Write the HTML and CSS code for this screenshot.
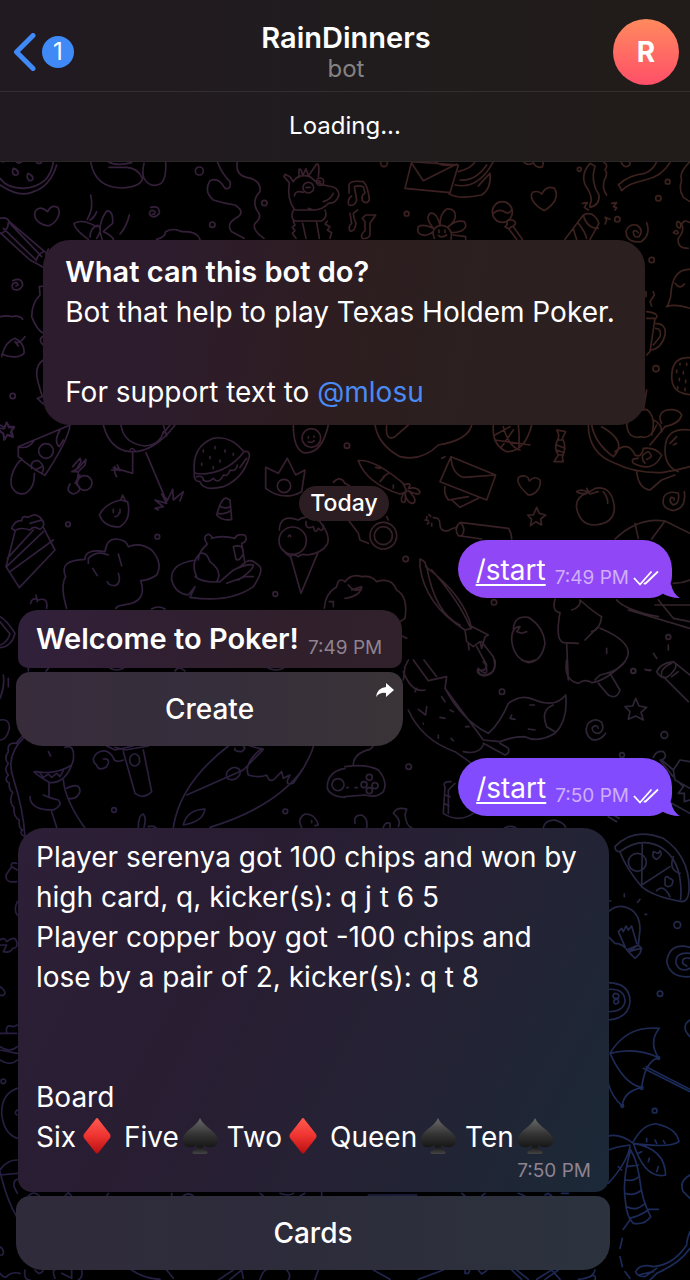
FILE: index.html
```html
<!DOCTYPE html>
<html lang="en">
<head>
<meta charset="utf-8">
<meta name="viewport" content="width=device-width, initial-scale=1">
<title>RainDinners</title>
<link rel="stylesheet" href="styles.css">
</head>
<body>
<svg class="defs" width="0" height="0" aria-hidden="true">
  <defs>
    <linearGradient id="red" x1="0" y1="0" x2="0" y2="1"><stop offset="0" stop-color="#ff5a50"/><stop offset=".5" stop-color="#ee3430"/><stop offset="1" stop-color="#b90f10"/></linearGradient>
    <linearGradient id="black" x1="0" y1="0" x2="0" y2="1"><stop offset="0" stop-color="#6a6a6a"/><stop offset=".45" stop-color="#343434"/><stop offset=".8" stop-color="#171717"/><stop offset="1" stop-color="#454545"/></linearGradient>
    <symbol id="diamond" viewBox="0 0 38 36"><path fill="url(#red)" d="M20 0Q21 0 22 2L33 16Q34 18 33 20L22 34Q20 37 18 34L7 20Q6 18 7 16L18 2Q19 0 20 0Z"/></symbol>
    <symbol id="spade" viewBox="0 0 38 36"><path fill="url(#black)" d="M20 0Q22 5 30 11C36 16 39 20 38 24C37 30 28 31 23 27Q23 32 27 33Q29 36 25 36H15Q11 36 13 33Q17 32 17 27C12 31 4 30 3 24C2 20 4 16 10 11Q18 5 20 0Z"/></symbol>
    <symbol id="checks" viewBox="0 0 26 16"><path d="M1 8L7 14.500L18.500 1.500M12 14L25 1.500M12 14L11 13" fill="none" stroke="#fff" stroke-width="1.800"/></symbol>
  </defs>
</svg>
<div class="chat">
  <svg class="wallpaper" viewBox="0 0 690 1280" preserveAspectRatio="xMidYMin slice" aria-hidden="true">
    <defs>
      <linearGradient id="warm" x1="0" x2="1" y1="0" y2="0"><stop offset="0" stop-color="#35203f"/><stop offset=".3" stop-color="#35203a"/><stop offset=".55" stop-color="#3c2022"/><stop offset="1" stop-color="#3c221c"/></linearGradient>
      <linearGradient id="cool" x1="0" x2="1" y1="0" y2="0"><stop offset="0" stop-color="#251e40"/><stop offset=".5" stop-color="#222247"/><stop offset="1" stop-color="#1b2c5c"/></linearGradient>
      <linearGradient id="fade" x1="0" x2="0" y1="0" y2="1"><stop offset=".35" stop-color="#000"/><stop offset=".85" stop-color="#fff"/></linearGradient>
      <mask id="lower" maskUnits="userSpaceOnUse" x="0" y="0" width="690" height="1280"><rect width="690" height="1280" fill="url(#fade)"/></mask>
      <mask id="doodles" maskUnits="userSpaceOnUse" x="0" y="0" width="690" height="1280">
        <g fill="none" stroke="#fff" stroke-width="5" stroke-linecap="round" stroke-linejoin="round">
          <g transform="translate(0 160) scale(.33333)">
            <path d="M0 55Q20 85 70 85Q150 80 160 5M0 75Q60 115 100 95Q150 80 170 15M40 25q-6 14 3 20q12 2 12-8q-4-10-15-12M84 40q-6 14 3 22q12 0 12-8q-4-10-15-14M48 2q3 12 16 4M110 8q12 6 16-4M5 5l8 0"/>
            <path d="M272 5Q285 85 370 84Q425 78 427 55Q415 25 380 22L327 22M325 5Q350 20 395 8M432 10Q425 40 432 55Q450 85 480 72Q500 60 497 5"/>
            <circle cx="598" cy="33" r="12"/><circle cx="793" cy="129" r="8"/><circle cx="637" cy="194" r="8"/><circle cx="38" cy="708" r="8"/>
            <path d="M652 5Q665 40 690 65Q695 90 675 85Q655 50 630 62Q610 95 640 120Q670 130 705 135Q735 155 715 170Q675 190 695 215Q715 225 732 235M712 5Q705 45 740 52Q785 60 780 95Q755 120 770 150Q790 170 765 190Q755 210 792 235"/>
            <path d="M140 197C110 190 98 170 107 152Q120 135 143 155Q153 133 173 142C185 160 172 185 148 197Z"/>
            <path d="M272 105Q282 145 262 178M290 155Q282 175 270 180M388 165Q380 200 360 222M265 238Q225 210 222 190Q245 175 290 200M300 210Q300 180 320 153Q340 150 338 190Q325 200 310 215Q335 225 340 238M270 232Q270 205 292 196Q310 205 290 235M300 215L306 238"/>
            <path d="M452 142Q480 135 478 160Q460 180 448 162Q450 145 465 155Q465 165 457 162M38 362Q65 350 68 375Q60 395 40 388Q30 370 48 367Q60 375 48 378"/>
            <path d="M470 238Q495 232 497 215Q520 202 545 215Q590 212 600 238"/>
            <path d="M0 175Q20 170 28 185L140 280M0 218L90 300Q110 310 135 325M25 187Q25 210 5 220M30 190L125 290M10 205L105 297M130 275Q115 280 108 302M145 267L138 285L150 300"/>
            <path d="M0 470Q25 465 35 470Q60 465 68 478M5 590Q15 545 45 535Q75 550 72 580Q50 600 5 583M75 530Q55 555 45 545L55 558M132 378L118 380L120 405Q95 430 95 470Q110 510 130 520M130 528Q112 540 130 555M130 600Q100 620 115 670L127 710L112 715L130 732"/>
            <path d="M868 68L852 50L855 43L870 50L880 65Q895 40 930 50Q955 75 985 78Q1015 80 1017 105Q1010 130 985 130Q970 148 945 150H885Q860 120 868 68M897 52V28Q905 25 908 48L918 26L925 48L950 12Q960 10 955 50M883 108Q885 90 910 97M1000 100Q990 120 970 125M925 145L940 150M880 150Q870 175 885 183H965Q985 170 975 150M880 184L885 195L877 202L885 212L877 220L888 235M908 190L918 235M950 188L958 235M982 184L975 192L990 200L982 210L995 218L990 235"/>
            <circle cx="925" cy="83" r="16"/><circle cx="960" cy="65" r="11"/><path d="M918 83L930 82M955 62L962 65"/>
            <path d="M0 795L13 802L20 787L27 803L43 802L32 817L39 832L22 826L12 840L10 822L0 812"/>
          </g>
          <g transform="translate(345 160) scale(.33333)">
            <path d="M12 100V75Q15 60 55 65Q70 80 73 120Q65 135 52 122Q48 105 60 100L55 80Q40 75 28 80L35 120Q30 140 12 135Q5 120 20 108M38 150L25 160Q25 175 33 190Q30 215 15 213Q8 200 20 190L15 160M60 185L52 175L62 165L92 165L75 190V225Q70 238 52 235Q45 225 60 212Z"/>
            <path d="M200 5L180 85L315 98L340 15ZM200 10L235 62L335 12M270 5Q290 20 320 15M340 35Q380 25 390 5M330 75Q400 90 445 5M345 60Q390 65 425 15M310 100Q340 120 410 105Q440 85 435 40Q415 60 400 78"/>
            <circle cx="117" cy="10" r="10"/><circle cx="185" cy="161" r="7"/><circle cx="703" cy="28" r="6"/><circle cx="968" cy="65" r="7"/><circle cx="940" cy="115" r="8"/><circle cx="920" cy="300" r="8"/><circle cx="933" cy="626" r="9"/><circle cx="817" cy="178" r="8"/>
            <path d="M598 152C565 135 552 110 563 97Q580 90 590 102Q605 75 628 85C645 110 625 135 598 152ZM535 5Q550 20 565 8Q570 22 590 22Q597 15 593 5"/>
            <path d="M265 215C240 235 210 225 220 200Q235 190 265 205Q240 175 255 160Q275 155 285 195Q285 160 305 147Q335 145 330 175Q325 190 310 200Q335 178 358 185Q370 200 350 212Q335 218 320 218M268 235C255 205 280 192 300 198Q325 210 318 238M325 225L362 230V238M282 210V218M300 210V218M280 226Q290 236 305 225"/>
            <ellipse cx="472" cy="156" rx="30" ry="31"/><path d="M445 160Q460 145 478 155Q490 165 500 150M485 185Q490 195 480 200Q490 210 500 200Q515 195 510 185Q505 178 490 180M492 208L515 238M505 200L532 238"/>
            <path d="M735 10L750 18Q735 65 762 105Q765 135 735 142M735 142V132Q745 120 730 90Q700 50 735 10M775 5Q792 15 780 30Q790 40 778 60Q770 85 785 105M820 72L830 92Q850 70 900 60Q950 50 975 8M820 75Q850 45 900 40Q925 30 935 5M828 5Q835 25 850 18Q860 10 852 5M800 130L815 128L805 140L815 143L810 150M712 130L727 128L718 142L730 150M780 192L785 180L780 172L795 178"/>
            <path d="M660 238L715 165Q745 150 762 190L735 238M715 165Q725 205 760 205M685 205Q690 225 695 238M700 190Q720 215 725 235"/>
            <path d="M905 188Q918 225 888 245Q845 250 843 215Q850 190 875 195Q898 210 882 230Q865 235 865 215Q872 208 880 218"/>
            <path d="M1035 5Q1000 40 1010 60Q1000 90 1015 112L1035 125M1035 188Q1015 175 1010 195Q1020 210 1000 235Q995 265 1030 265M997 185Q1012 185 1005 205Q990 200 997 185M985 218Q995 205 1000 218Q995 225 985 218M1035 328Q980 325 977 410Q970 435 965 440Q990 430 1035 445M990 370Q1005 390 1018 372M925 395L928 405L915 425L920 438M903 395V410M905 585L915 575L930 475M905 455Q945 460 933 475H905M930 490Q965 490 960 525Q950 565 918 570M932 505Q950 505 945 530L925 555"/>
            <path d="M1035 593Q990 590 982 630Q970 700 1035 704M1005 610V615M1025 610V616M995 630V638M1015 635V642M1003 655V662M1022 660V668M998 680V687M1020 685V692"/>
            <path d="M905 690L895 750M845 795Q860 750 905 748Q935 770 920 825M950 790Q935 760 965 750Q1000 745 1010 765Q1005 790 960 800M925 780Q950 790 950 815"/>
          </g>
          <g transform="translate(0 420) scale(.33333)">
            <path d="M0 25L13 26L20 7L28 20L43 20L34 32L39 48L22 44L14 58L10 40L0 35M210 15L55 80V110Q95 145 135 166Q205 60 210 15M55 80Q85 90 103 60M180 30Q160 65 178 80L190 60M65 115Q25 160 35 200Q50 230 80 218Q105 200 103 160"/><circle cx="138" cy="93" r="22"/><path d="M95 145Q90 120 115 122Q140 140 125 160M105 150L125 140"/>
            <path d="M310 15Q330 90 390 95Q460 100 525 15M363 15Q370 70 435 78Q480 75 490 35M490 15L500 48M510 15L490 40M390 90Q395 80 405 92M398 95V160L340 143M345 140Q340 155 350 170M335 150H355M352 135L360 152M438 98L500 245M475 270L465 265L490 260L465 240L500 250L485 222L503 240L518 208L520 240L550 215L540 243"/>
            <path d="M235 158L230 195M240 165L225 190M218 140L240 115L243 125L228 150M235 145L258 118L255 135L235 155L215 155Z"/><circle cx="254" cy="189" r="22"/><path d="M210 192Q195 215 220 222Q245 215 238 200"/>
            <path d="M362 240Q315 250 298 285Q315 325 360 320Q395 300 383 245ZM362 240L368 225L377 245M340 268V278M360 268V278M345 290Q355 290 358 278"/>
            <circle cx="204" cy="313" r="7"/><circle cx="472" cy="350" r="7"/><circle cx="826" cy="522" r="7"/>
            <path d="M583 158Q575 80 640 55Q690 45 732 95Q750 90 748 110Q730 175 670 200Q610 215 600 185Q580 185 583 158Q600 165 625 160Q690 150 732 95M590 170Q610 165 610 180Q625 190 640 175Q655 195 670 165Q685 170 690 150Q710 155 712 135M740 115L720 142M610 90V96M630 110V116M645 80V86M660 120V126M675 90V96M700 100V106M605 130V136M640 140V146"/>
            <path d="M797 142L797 205Q850 245 905 215L915 150L887 165L862 115L835 160Z"/><circle cx="852" cy="198" r="20"/>
            <path d="M680 235Q665 230 650 285Q670 305 695 298L690 240ZM658 258Q675 268 690 260M652 280Q675 285 692 272M880 15Q880 85 910 98Q965 105 985 15"/><circle cx="934" cy="54" r="28"/><path d="M925 50V54M942 48V52M925 65Q938 70 943 62"/>
            <path d="M35 325Q45 300 65 302Q65 285 85 292Q110 275 125 298Q140 315 120 328Q100 315 90 330Q60 320 45 332ZM45 335L18 440L58 503L165 390L130 322M20 440L130 335M22 415L100 330M30 455L160 360M125 300L90 310"/>
            <path d="M200 565Q180 500 197 470Q175 420 255 418Q255 385 315 395Q320 355 350 357Q380 360 385 380Q420 365 455 390Q490 430 470 465Q450 480 422 482Q440 535 395 550L355 558L347 565M265 430V415Q290 390 325 405M355 402L365 437M278 445L292 467M355 460Q365 490 345 497Q325 497 322 485"/>
            <path d="M595 420Q595 395 622 372Q605 350 625 343Q640 350 635 355Q665 345 705 355Q710 340 735 345Q745 365 725 370L735 430M588 420Q510 430 515 480Q525 520 565 525L585 500L570 532Q690 550 760 500Q790 455 780 440Q755 415 740 425M590 470Q570 430 600 400Q620 395 630 425Q670 455 650 485M585 470Q610 490 660 485L700 450Q725 440 732 430M700 380Q730 370 730 400Q720 425 708 418ZM680 490L735 470L760 470M715 480Q760 450 760 435Q745 430 700 450"/>
            <circle cx="878" cy="362" r="41"/><path d="M838 330Q840 280 895 300Q920 280 960 305Q995 350 980 375Q965 400 920 405Q905 400 895 410Q880 400 870 410Q855 400 850 390M872 410L903 520L955 395M918 305Q915 330 940 320Q945 345 955 325Q970 340 970 315M865 350Q870 340 872 350"/>
            <path d="M92 550Q95 530 115 540Q145 530 140 565M108 525L112 545M0 590Q20 600 45 640Q35 680 0 683M0 605L30 642Q20 670 0 675M455 567Q475 555 495 567M1035 485Q1015 470 1010 500Q975 520 973 565M1000 187Q1020 165 1035 190M988 545H1000V560"/>
            <path d="M85 745V753M145 745L138 753M330 745Q350 755 370 745M525 753Q535 735 555 753M805 745Q830 755 850 745"/>
          </g>
          <g transform="translate(345 420) scale(.33333)">
            <path d="M90 15Q100 75 165 110Q230 125 280 75Q370 60 380 15M125 15Q120 65 150 50L190 15M40 122Q85 115 175 190L185 215L165 222Q65 190 40 122M92 142L105 145M118 170L105 185M145 195V205M130 160L115 170M185 210Q165 230 170 245Q185 255 180 220Q185 250 205 250Q220 240 190 212Q225 230 225 215Q215 200 190 205Q205 185 175 195"/>
            <path d="M318 110L285 185L425 240L452 165ZM318 110Q320 160 355 172L452 165M300 200Q295 220 310 240L370 230M320 240L345 262L400 235M290 115L300 110"/>
            <path d="M445 15Q440 75 485 95Q540 95 560 15M450 45L495 20M448 60L555 75M470 80L505 30M475 20Q490 80 525 90M520 15Q525 60 520 90"/>
            <path d="M635 30Q645 45 638 60Q625 85 640 105L627 125H655Q650 115 655 100Q665 80 652 55L662 35ZM637 60H655M635 75L660 85M635 90L658 98M640 105H655"/>
            <path d="M730 15Q730 100 810 130Q870 160 950 158Q1000 150 1035 140M740 15Q750 70 805 110Q850 65 770 20M845 15Q850 60 890 50Q915 60 935 15M810 95Q850 60 870 105Q890 115 895 85Q930 80 950 105Q925 160 865 130Q855 115 880 115M900 130Q880 105 910 95Q930 110 905 118M960 20L915 75M1035 30Q960 20 960 90Q960 140 1000 155M875 155Q880 205 915 210L950 180L990 165M975 70L995 50M985 75L995 70"/>
            <path d="M550 225C510 190 510 165 540 168Q550 170 553 183Q570 165 585 180C590 205 570 225 550 225ZM575 262L583 280L602 285L587 297L590 315L573 305L556 317L560 298L548 285H565Z"/>
            <path d="M730 218Q690 230 695 265Q705 315 750 315Q810 310 808 260Q800 195 750 205L730 218L725 205L735 222L760 215M695 215Q710 205 730 218Q705 225 695 215M775 215Q790 235 788 250"/>
            <path d="M1018 215Q1025 265 985 272Q945 265 957 230Q970 210 1000 220Q1005 250 985 255Q970 245 978 232Q990 232 987 240"/>
            <path d="M245 290V298M252 284L257 289M240 300L250 302M247 312L252 307M260 310V318M265 293Q285 290 285 315Q285 335 310 332Q330 320 335 325M345 307L490 325Q500 340 500 357M345 307Q325 325 340 347L410 357M345 307Q365 325 350 348"/><circle cx="115" cy="347" r="40"/><circle cx="115" cy="347" r="27"/><circle cx="6" cy="77" r="8"/><circle cx="182" cy="417" r="8"/><circle cx="447" cy="547" r="8"/><circle cx="970" cy="651" r="7"/><circle cx="865" cy="753" r="7"/>
            <path d="M0 190L25 205M10 300L40 340L45 360L70 370M125 290L130 300M225 417Q245 425 242 440Q360 530 380 625L360 630Q240 555 225 440ZM245 440Q270 580 345 615M260 450Q340 540 375 620M360 630L365 665L385 680L405 665L410 685L420 650L430 645L382 620M370 670L372 690M395 680L425 735Q425 755 400 750M410 665L445 710Q460 760 420 765Q400 765 400 750"/>
            <path d="M0 485Q20 460 50 470Q80 465 95 485Q140 470 155 510Q190 530 180 595L165 605M0 535Q40 530 50 505Q30 520 10 495M50 500L20 510M165 645L185 655"/>
            <path d="M505 625Q510 585 550 592Q595 620 600 670Q590 725 550 728Q505 715 500 660Q500 620 525 620L515 635L530 640L545 635"/>
            <path d="M810 357Q880 290 960 303L1035 340M870 310L880 355M960 303L920 357M940 590Q840 570 815 540M930 555H1035M940 540L985 595L1035 605M850 570L1035 625M985 490Q1010 490 1035 480"/>
            <path d="M630 537Q620 575 645 578M680 570Q710 560 705 540Q750 580 770 590Q765 630 740 635M645 578Q630 660 655 668L700 670M720 660L760 620M765 625Q850 660 850 700Q840 750 765 765L750 780M665 672L670 780M785 685V700M925 700L935 715M970 675V690M905 750H918"/>
          </g>
          <g transform="translate(0 660) scale(.33333)">
            <path d="M10 45Q15 80 0 115M25 55V80M0 180Q30 175 28 205Q20 240 0 240M75 230Q15 285 40 355Q70 450 75 530M50 248L70 225M50 250Q20 245 25 275Q10 295 25 310Q10 330 25 345Q10 360 28 370Q25 385 38 398Q25 425 42 443Q40 470 58 480Q55 505 68 510Q55 520 75 530M195 262Q225 250 220 300Q200 370 150 368Q110 345 102 335M105 335Q170 345 215 315M120 340L130 352L145 342L155 352L170 340L180 350L190 332M147 370V410M190 360Q195 420 255 505M90 410Q90 450 160 450Q190 435 175 420Q150 415 130 405M155 455L170 502M200 385Q240 365 240 395Q230 420 208 415M145 275L152 288"/>
            <path d="M320 258L345 270L400 258M345 262L375 270L445 258M370 275L405 400Q430 420 455 395L430 270M370 300Q345 310 340 293Q320 260 290 280Q270 300 290 315Q295 335 320 320Q335 295 310 297"/><ellipse cx="404" cy="300" rx="15" ry="18"/>
            <circle cx="342" cy="450" r="7"/><circle cx="856" cy="454" r="7"/><circle cx="1014" cy="374" r="18"/>
            <path d="M685 258Q540 370 520 502M705 265Q700 275 725 275Q740 265 730 258M750 258L790 268L730 330L560 405M630 502Q830 440 910 325Q940 270 940 258M785 265Q730 310 745 345Q780 355 800 345Q810 375 830 350L845 335L850 355L870 345Q850 380 880 370L910 325M550 495Q560 450 615 447Q610 485 550 495"/><ellipse cx="700" cy="341" rx="22" ry="17" transform="rotate(-30 700 341)"/>
            <path d="M1035 325Q980 335 982 385Q990 410 1035 412M415 502Q415 465 430 462Q440 475 432 502M445 500Q460 495 470 505M905 502Q890 475 915 462Q945 460 955 495L945 497M935 482V488"/>
          </g>
          <g transform="translate(345 660) scale(.33333)">
            <path d="M175 60L180 20L190 0M205 0L250 62L305 50L300 85Q350 180 430 220Q465 190 490 130Q530 100 570 120Q630 145 662 105Q670 180 630 220Q580 250 540 230Q500 230 465 245L415 240L300 85M175 35Q200 100 240 90M190 150Q230 240 330 275L380 310M355 275Q400 285 415 255M415 250L480 285Q495 280 490 265L465 250M625 135Q585 150 605 200L630 215M215 85L210 95M245 140L242 165L220 148M290 110L300 125M315 150L325 155M285 172L300 175M235 190V192M362 200H372M280 225V235M318 235L325 242M500 165L495 175L510 178M555 135H568M550 207L570 210M237 0L275 50"/>
            <path d="M450 0Q455 45 415 48Q390 40 400 25Q425 50 425 30Q425 15 415 5M665 0Q655 60 700 70Q720 55 740 68Q780 65 840 5M760 70L790 105Q815 120 825 90L795 40M935 35Q945 10 985 5Q1005 15 975 45Q955 65 935 35M955 50L1030 125M985 5L1035 45M980 10Q945 25 950 45M980 50L1000 35"/>
            <circle cx="471" cy="95" r="8"/><circle cx="191" cy="320" r="8"/><circle cx="865" cy="33" r="7"/><circle cx="958" cy="225" r="10"/><circle cx="831" cy="285" r="7"/><path d="M900 28L915 32M530 0Q550 10 570 0"/>
            <path d="M872 115L882 138L905 142L888 157L895 180L872 168L850 178L855 155L840 140L863 138ZM782 220Q765 245 740 238Q715 220 728 192Q750 170 770 187Q780 210 762 220Q740 220 742 203Q755 190 760 205"/>
            <path d="M85 258L75 268Q25 280 25 315M0 320Q65 310 100 330Q130 365 115 395Q95 415 60 405L0 410M5 383H10M30 383H37"/><circle cx="73" cy="352" r="9"/><circle cx="57" cy="374" r="9"/><circle cx="90" cy="377" r="9"/><circle cx="73" cy="392" r="9"/>
            <path d="M318 365Q290 365 300 380L295 460Q340 490 385 460M330 370L310 390V460M300 405L315 410M297 430L312 438M30 490Q25 465 50 465Q70 475 65 503M115 502Q120 485 135 490V503M145 460Q155 440 185 447L180 465Q185 500 200 503M160 500Q170 480 145 460M480 503Q495 495 512 503M595 503Q600 480 630 480Q660 490 662 503"/>
            <path d="M925 292Q935 270 955 275Q970 290 950 300M945 300L985 350M950 300L985 330M1035 305L1005 300L985 330L990 360L1035 385M1000 365L1015 380L1000 400H1018V425L1035 420M980 430L1035 460M790 470L815 485M805 465L822 475"/>
          </g>
          <g transform="translate(0 820) scale(.33333)">
            <path d="M50 130Q30 125 35 140L18 165Q15 190 50 185M35 140L52 150M52 245Q40 270 52 285M0 360Q15 350 20 365Q45 345 50 365Q55 385 38 385Q30 400 10 395L20 375L0 375M0 500Q15 510 15 520Q10 530 0 525M20 640Q15 610 40 620L52 615M0 640L50 640M0 680Q30 700 52 680M0 690L52 700"/>
          </g>
          <g transform="translate(0 1060) scale(.33333)">
            <path d="M0 0Q30 20 52 0M52 85Q5 100 5 160Q10 220 52 235M52 150Q40 160 52 165M0 330Q20 300 52 300M0 345L52 340M0 335Q20 420 50 470M42 380Q40 360 52 358M42 380L52 400M0 560Q15 570 8 585H0M0 640Q15 660 25 645Q40 635 60 640M75 630Q70 660 90 660M105 630Q120 650 130 630M165 655Q155 630 165 630M185 640L215 655V630M245 630Q250 650 235 660M395 630Q430 655 480 658M500 630L520 655M655 660L700 630M690 658L725 630L730 655M780 658Q790 630 800 630M860 630Q875 645 865 660M955 630L945 658M85 408Q100 390 118 408M195 408L205 398L215 408M325 400L320 408M515 400V408M550 408Q565 395 580 408M780 400L790 408M840 400Q865 410 880 400M915 400L900 408M965 395V408"/><circle cx="10" cy="64" r="7"/>
          </g>
          <g transform="translate(345 1040) scale(.33333)">
            <path d="M70 465H215M350 460L360 468M420 460L410 468M520 460L540 468M600 465L610 460L620 468M650 460H670M85 690L135 718M220 718L295 690M360 690V700H370L375 690M400 690L410 702L425 692M500 690L530 718M515 690L550 718M620 690L575 718M640 690L600 718M620 690L645 718M700 718Q745 715 750 690"/>
          </g>
          <g transform="translate(590 820) scale(.33333)">
            <path d="M75 80Q130 20 220 55Q300 110 297 210Q295 245 275 245Q190 230 155 200Q105 140 90 95Q75 95 75 80M90 95Q150 50 210 80Q280 120 272 238M157 68L155 195L240 140M190 95L205 100L210 92Q220 105 200 118Q185 115 190 95M225 175Q230 165 238 175Q255 178 245 195Q235 205 225 195ZM250 110Q235 150 270 160M200 212Q220 190 240 230"/><circle cx="142" cy="127" r="27"/>
            <path d="M55 275Q85 250 115 265Q150 280 150 330L145 375L115 395Q100 370 75 370L55 350M85 335L105 380M85 335L95 325L100 335L108 318L115 330L125 318L140 370M110 390L145 375L155 385L150 400L135 415L115 395M115 395L152 385M103 222V230M150 238L143 247M165 283H170M58 243H62"/>
            <circle cx="262" cy="315" r="10"/><circle cx="210" cy="521" r="8"/><circle cx="194" cy="872" r="7"/>
            <path d="M300 382Q240 365 230 425Q240 475 300 470M300 400Q255 395 258 430Q270 460 300 445M300 415Q275 410 278 430L290 438M55 488Q120 490 120 545Q115 595 55 600M55 508Q105 505 105 545Q100 575 55 575M75 520Q90 520 85 535L72 535Q65 525 75 520M80 536Q95 550 75 552Q65 542 80 536M300 600Q270 620 300 650"/>
            <path d="M60 700Q110 615 208 625Q175 665 205 713Q165 725 155 803Q100 815 97 858Q65 830 55 790M60 700Q140 680 205 713M60 700Q100 790 155 803M160 745L300 815M168 740L300 808"/><circle cx="205" cy="714" r="4"/><circle cx="155" cy="804" r="4"/><circle cx="97" cy="858" r="4"/>
            <path d="M130 965Q160 910 200 912Q260 925 267 965Q240 985 130 970Q225 985 227 1065Q165 1080 130 970Q90 940 55 948M120 975Q80 980 55 990M120 980Q110 1030 55 1090M122 990Q95 1080 107 1150Q110 1190 130 1210Q165 1215 182 1190Q155 1140 148 1070Q140 1020 122 990M108 1080Q130 1085 147 1070M106 1120Q130 1130 155 1110M110 1160Q140 1175 165 1150M118 1195Q145 1190 175 1170M110 1040L145 1035M170 965V955M200 970L195 960M225 970L220 962M145 1000L155 995M175 1025L178 1015M200 1055L205 1040M85 1040L95 1050M175 1168H205M100 1228L120 1200M97 1255L90 1285M90 1310L97 1340M105 1355L120 1375M300 1065Q265 1085 280 1115L300 1135M300 1235Q290 1260 290 1275Q250 1335 190 1340Q150 1330 137 1355Q140 1370 165 1370L200 1345M300 1285Q270 1330 200 1360L180 1380M145 1365L190 1355M0 1370Q20 1360 15 1380"/>
          </g>
        </g>
      </mask>
    </defs>
    <g mask="url(#doodles)">
      <rect width="690" height="1280" fill="url(#warm)"/>
      <rect width="690" height="1280" fill="url(#cool)" mask="url(#lower)"/>
    </g>
  </svg>

  <header class="top">
    <div class="bar">
      <button class="back" type="button" aria-label="Back, 1 unread">
        <svg width="24" height="38" viewBox="0 0 24 38" aria-hidden="true"><path d="M20 2.500L3.500 19L20 35.500" fill="none" stroke="#3f8af7" stroke-width="5" stroke-linecap="round" stroke-linejoin="round"/></svg>
        <span class="unread">1</span>
      </button>
      <div class="who">
        <h1 class="name">RainDinners</h1>
        <p class="kind">bot</p>
      </div>
      <button class="avatar" type="button" aria-label="Profile">R</button>
    </div>
    <p class="loading">Loading...</p>
  </header>

  <main class="feed">
    <section class="intro">
      <h2 class="intro-title">What can this bot do?</h2>
      <p>Bot that help to play Texas Holdem Poker.</p>
      <p class="support">For support text to <a class="mention" href="#mlosu">@mlosu</a></p>
    </section>

    <p class="day">Today</p>

    <article class="out first">
      <a class="command" href="#start">/start</a>
      <time class="time">7:49 PM</time>
      <svg class="checks" role="img" aria-label="Read"><use href="#checks"/></svg>
      <svg class="tail" viewBox="0 0 24 14" aria-hidden="true"><path fill="currentColor" d="M0 7Q8 5 15 0Q17 10 24 14Q13 14 4 8Z"/></svg>
    </article>

    <article class="in welcome">
      <div class="bubble short">
        <strong class="hello">Welcome to Poker!</strong>
        <time class="time">7:49 PM</time>
      </div>
      <button class="action" type="button">Create
        <svg class="share" viewBox="0 0 18 14" aria-hidden="true"><path fill="#fff" d="M10 0L18 7L10 14V10Q4 9 0 14Q1 5 10 4Z"/></svg>
      </button>
    </article>

    <article class="out second">
      <a class="command" href="#start">/start</a>
      <time class="time">7:50 PM</time>
      <svg class="checks" role="img" aria-label="Read"><use href="#checks"/></svg>
      <svg class="tail" viewBox="0 0 24 14" aria-hidden="true"><path fill="currentColor" d="M0 7Q8 5 15 0Q17 10 24 14Q13 14 4 8Z"/></svg>
    </article>

    <article class="in result">
      <div class="bubble long">
        <p>Player serenya got 100 chips and won by<br>high card, q, kicker(s): q j t 6 5</p>
        <p>Player copper boy got -100 chips and<br>lose by a pair of 2, kicker(s): q t 8</p>
        <p class="board">Board</p>
        <p class="cards"><span>Six<svg class="suit" role="img" aria-label="diamonds"><use href="#diamond"/></svg></span> <span>Five<svg class="suit" role="img" aria-label="spades"><use href="#spade"/></svg></span> <span>Two<svg class="suit" role="img" aria-label="diamonds"><use href="#diamond"/></svg></span> <span>Queen<svg class="suit" role="img" aria-label="spades"><use href="#spade"/></svg></span> <span>Ten<svg class="suit" role="img" aria-label="spades"><use href="#spade"/></svg></span></p>
        <time class="time">7:50 PM</time>
      </div>
      <button class="action" type="button">Cards</button>
    </article>
  </main>
</div>
</body>
</html>
```
FILE: styles.css
```css
* { box-sizing: border-box; }

body {
  margin: 0;
  background: #000;
  color: #fff;
  font-family: Inter, "Noto Sans", sans-serif;
  font-size: 28px;
  line-height: 40px;
}

h1, h2, p { margin: 0; font-size: inherit; }

button {
  border: 0;
  padding: 0;
  background: none;
  color: inherit;
  font: inherit;
  cursor: pointer;
}

.defs { position: absolute; }

.chat {
  position: relative;
  min-height: 100vh;
  overflow: hidden;
}

.wallpaper {
  position: absolute;
  top: 0;
  left: 0;
  width: 100%;
  height: auto;
}

/* Header */
.top {
  position: relative;
  background: linear-gradient(90deg, #211a21, #201c1e 50%, #211c19);
  border-bottom: 1px solid #2b2727;
}

.bar {
  display: grid;
  grid-template-columns: 1fr auto 1fr;
  align-items: center;
  height: 92px;
  padding: 13px 11px 0 13px;
  border-bottom: 1px solid #322d2f;
}

.back {
  display: flex;
  align-items: center;
  gap: 5px;
  justify-self: start;
}

.unread {
  width: 32px;
  height: 32px;
  border-radius: 50%;
  background: #3f8af7;
  font-size: 24px;
  line-height: 32px;
}

.who { text-align: center; }

.name {
  font-size: 29px;
  font-weight: 600;
  line-height: 34px;
}

.kind {
  color: #858283;
  font-size: 24px;
  line-height: 28px;
}

.avatar {
  justify-self: end;
  width: 66px;
  height: 66px;
  border-radius: 50%;
  background: linear-gradient(#ff8a5e, #ff4f68);
  font-weight: 700;
}

.loading {
  padding: 14px 0 15px;
  font-size: 24px;
  text-align: center;
}

/* Messages */
.feed {
  position: relative;
  display: flex;
  flex-direction: column;
  padding: 78px 18px 9px 16px;
}

.intro {
  align-self: center;
  padding: 12px 30px 13px 22px;
  border-radius: 27px;
  background: linear-gradient(100deg, #2d1c2d 20%, #2d1d20 48%, #2b201f 75%);
}

.intro-title,
.hello {
  font-size: 29px;
  font-weight: 600;
}

.support { padding-top: 40px; }

.mention {
  color: #4a8af4;
  text-decoration: none;
}

.day {
  align-self: center;
  margin: 61px 0 19px;
  padding: 0 11px;
  border-radius: 18px;
  background: #2c1d22;
  font-size: 23px;
  font-weight: 500;
  line-height: 35px;
}

.time {
  color: #8f8390;
  font-size: 19px;
  line-height: 24px;
}

.out {
  position: relative;
  display: flex;
  align-items: flex-end;
  align-self: flex-end;
  height: 58px;
  padding: 0 13px 8px 18px;
  border-radius: 29px 29px 22px 29px;
}

.first { background: #9047f5; color: #9047f5; }
.second { background: #824cfe; color: #824cfe; }

.command {
  margin-right: 9px;
  color: #fff;
  text-decoration: underline;
  text-decoration-thickness: 2px;
  text-decoration-skip-ink: none;
  text-underline-offset: 4px;
}

.out .time { color: #d0aefb; }

.checks {
  width: 26px;
  height: 16px;
  margin: 0 0 4px 4px;
}

.tail {
  position: absolute;
  right: -8px;
  bottom: 0;
  width: 24px;
  height: 14px;
}

.in {
  display: flex;
  flex-direction: column;
  align-self: flex-start;
  gap: 4px;
}

.welcome { width: 387px; max-width: 100%; margin: 12px 0; }
.result { width: 594px; max-width: 100%; margin-top: 12px; }

.bubble { margin: 0 1px 0 2px; }

.short {
  display: flex;
  align-items: flex-end;
  gap: 9px;
  padding: 8px 18px;
  border-radius: 20px 20px 10px 10px;
  background: linear-gradient(90deg, #31203a, #301f2c 60%, #30212b);
}

.hello { line-height: 42px; }

.action {
  position: relative;
  height: 74px;
  border-radius: 14px 14px 27px 27px;
  background: linear-gradient(90deg, #382c3b, #352e3b 50%, #3a3438);
  font-weight: 500;
}

.share {
  position: absolute;
  top: 11px;
  right: 9px;
  width: 18px;
  height: 14px;
}

.long {
  display: flex;
  flex-direction: column;
  padding: 9px 18px 8px;
  border-radius: 26px 26px 14px 14px;
  background: linear-gradient(118deg, #2c1f37, #291d32 35%, #262134 60%, #1f2635 85%, #1b2938);
}

.board { padding-top: 80px; }

.suit {
  width: 38px;
  height: 36px;
  margin: 0 1px;
  vertical-align: -7px;
}

.cards span { white-space: nowrap; }

.long .time { align-self: flex-end; line-height: 27px; }

.result .action {
  background: linear-gradient(90deg, #302b3b, #2d2c3b 50%, #2c333e);
}
```
